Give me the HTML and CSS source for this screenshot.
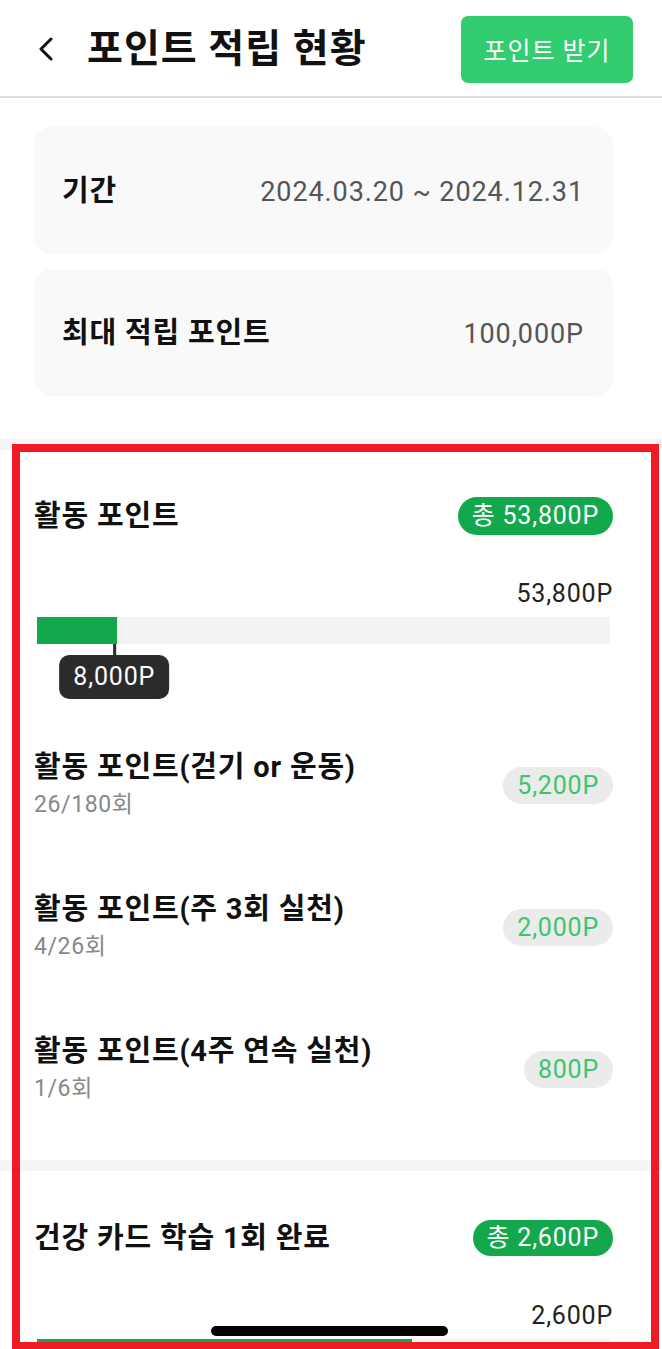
FILE: index.html
```html
<!DOCTYPE html>
<html lang="ko">
<head>
<meta charset="utf-8">
<title>포인트 적립 현황</title>
<link rel="stylesheet" href="styles.css">
</head>
<body>
<div class="screen">
  <header class="topbar">
    <button class="back" aria-label="뒤로">
      <svg width="16" height="24" viewBox="0 0 16 24"><polyline points="13,2 3,12 13,22" fill="none" stroke="#111" stroke-width="3" stroke-linecap="round" stroke-linejoin="round"/></svg>
    </button>
    <h1 class="title">포인트 적립 현황</h1>
    <button class="receive">포인트 받기</button>
  </header>

  <section class="summary">
    <div class="info-card">
      <span class="info-label">기간</span>
      <span class="info-value">2024.03.20 ~ 2024.12.31</span>
    </div>
    <div class="info-card">
      <span class="info-label">최대 적립 포인트</span>
      <span class="info-value">100,000P</span>
    </div>
  </section>

  <section class="block block-activity">
    <div class="block-head">
      <h2 class="block-title">활동 포인트</h2>
      <span class="total-badge">총 53,800P</span>
    </div>
    <div class="amount">53,800P</div>
    <div class="progress has-tip">
      <div class="track"><div class="fill" style="width:14%"></div></div>
      <div class="tip" style="left:14%">
        <span class="tip-stem"></span>
        <span class="tip-box">8,000P</span>
      </div>
    </div>

    <ul class="rows">
      <li class="row">
        <div class="row-text">
          <div class="row-title">활동 포인트(걷기 or 운동)</div>
          <div class="row-sub">26/180회</div>
        </div>
        <span class="pill">5,200P</span>
      </li>
      <li class="row">
        <div class="row-text">
          <div class="row-title">활동 포인트(주 3회 실천)</div>
          <div class="row-sub">4/26회</div>
        </div>
        <span class="pill">2,000P</span>
      </li>
      <li class="row">
        <div class="row-text">
          <div class="row-title">활동 포인트(4주 연속 실천)</div>
          <div class="row-sub">1/6회</div>
        </div>
        <span class="pill">800P</span>
      </li>
    </ul>
  </section>

  <section class="block block-card">
    <div class="block-head">
      <h2 class="block-title">건강 카드 학습 1회 완료</h2>
      <span class="total-badge">총 2,600P</span>
    </div>
    <div class="amount amount-2">2,600P</div>
    <div class="progress">
      <div class="track"><div class="fill" style="width:65.5%"></div></div>
    </div>
  </section>

  <div class="home-indicator"></div>
  <div class="highlight-frame"></div>
</div>
</body>
</html>
```

FILE: styles.css
```css
* { box-sizing: border-box; }
html, body { margin: 0; padding: 0; background: #ffffff; }
body {
  font-family: Roboto, "Noto Sans CJK KR", sans-serif;
  color: #111111;
}
.screen {
  position: relative;
  width: 662px;
  height: 1349px;
  overflow: hidden;
  background: #f4f4f4;
}

/* header */
.topbar {
  height: 98px;
  display: flex;
  align-items: center;
  padding: 0 29px 0 38px;
  background: #ffffff;
  border-bottom: 2px solid #dddddd;
}
.back {
  width: 16px;
  height: 24px;
  padding: 0;
  border: 0;
  background: none;
  display: flex;
  margin-top: 2px;
}
.title {
  margin: 2px 0 0 33px;
  font-size: 39px;
  font-weight: 700;
  line-height: 46px;
  letter-spacing: 1px;
  flex: 1;
}
.receive {
  width: 172px;
  height: 67px;
  margin-top: 2px;
  border: 0;
  border-radius: 7px;
  background: #33cd70;
  color: #ffffff;
  font-family: Roboto, "Noto Sans CJK KR", sans-serif;
  font-size: 25px;
  font-weight: 400;
  letter-spacing: 1px;
}

/* summary cards */
.summary {
  background: #ffffff;
  padding: 29px 49px 43px 34px;
  display: flex;
  flex-direction: column;
  gap: 15px;
}
.info-card {
  height: 127px;
  border-radius: 18px;
  background: #f9f9f9;
  display: flex;
  align-items: center;
  justify-content: space-between;
  padding: 0 29px 0 28px;
}
.info-label {
  font-size: 29px;
  font-weight: 700;
  line-height: 34px;
  letter-spacing: 0.8px;
}
.info-value {
  font-size: 27px;
  color: #555555;
  line-height: 34px;
  margin-top: 2px;
  letter-spacing: 0.9px;
}

/* point blocks */
.block {
  background: #ffffff;
  padding: 47px 49px 55px 34px;
}
.block-activity { margin-top: 11px; }
.block-card { margin-top: 11px; padding-top: 48px; }
.block-head {
  display: flex;
  align-items: center;
  justify-content: space-between;
}
.block-title {
  margin: 0;
  font-size: 29px;
  font-weight: 700;
  line-height: 38px;
  letter-spacing: 0.8px;
}
.total-badge {
  height: 38px;
  line-height: 38px;
  padding: 0 14px;
  border-radius: 19px;
  background: #14a84c;
  color: #ffffff;
  font-size: 25px;
  letter-spacing: 0.8px;
}
.block-card .total-badge { height: 36px; line-height: 36px; }
.amount {
  margin-top: 44px;
  text-align: right;
  font-size: 25px;
  line-height: 30px;
  color: #222222;
  letter-spacing: 0.8px;
}
.amount-2 { margin-top: 44px; }

.progress {
  position: relative;
  margin: 8px 3px 0 3px;
}
.progress.has-tip { padding-bottom: 55px; }
.track {
  height: 27px;
  background: #f3f3f3;
}
.fill {
  height: 100%;
  background: #14a84c;
}
.tip {
  position: absolute;
  top: 27px;
  display: flex;
  flex-direction: column;
  align-items: center;
  transform: translateX(-50%);
  margin-left: -3px;
}
.tip-stem {
  width: 3px;
  height: 11px;
  background: #2b2b2b;
}
.tip-box {
  height: 44px;
  line-height: 44px;
  padding: 0 14px;
  border-radius: 10px;
  background: #2b2b2b;
  color: #ffffff;
  font-size: 25px;
  letter-spacing: 0.8px;
  white-space: nowrap;
}

/* detail rows */
.rows {
  list-style: none;
  margin: 50px 0 0 0;
  padding: 0;
  display: flex;
  flex-direction: column;
  gap: 70px;
}
.row {
  display: flex;
  align-items: center;
  justify-content: space-between;
}
.row-title {
  font-size: 29px;
  font-weight: 700;
  line-height: 36px;
  letter-spacing: 0.8px;
}
.row-sub {
  margin-top: 4px;
  font-size: 23px;
  line-height: 32px;
  color: #888888;
  letter-spacing: 0.6px;
}
.pill {
  height: 37px;
  line-height: 37px;
  padding: 0 14px;
  border-radius: 19px;
  background: #ebebeb;
  color: #3cc46e;
  font-size: 25px;
  letter-spacing: 0.8px;
}

/* overlays */
.home-indicator {
  position: absolute;
  left: 211px;
  top: 1326px;
  width: 237px;
  height: 10px;
  border-radius: 5px;
  background: #000000;
}
.highlight-frame {
  position: absolute;
  left: 12px;
  top: 444px;
  width: 647px;
  height: 906px;
  border: 8px solid #ed1c24;
  pointer-events: none;
}
```
